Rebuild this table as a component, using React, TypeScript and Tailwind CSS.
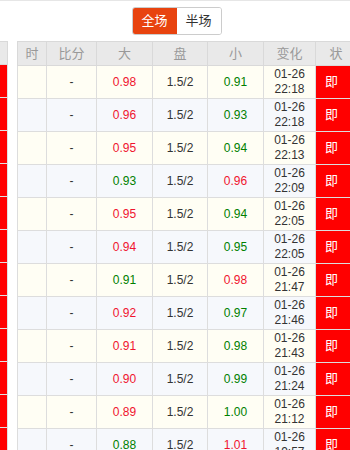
import React from "react";

type Row = { big: string; bigUp: boolean; small: string; smallUp: boolean; time: string };

const rows: Row[] = [
  { big: "0.98", bigUp: true, small: "0.91", smallUp: false, time: "22:18" },
  { big: "0.96", bigUp: true, small: "0.93", smallUp: false, time: "22:18" },
  { big: "0.95", bigUp: true, small: "0.94", smallUp: false, time: "22:13" },
  { big: "0.93", bigUp: false, small: "0.96", smallUp: true, time: "22:09" },
  { big: "0.95", bigUp: true, small: "0.94", smallUp: false, time: "22:05" },
  { big: "0.94", bigUp: true, small: "0.95", smallUp: false, time: "22:05" },
  { big: "0.91", bigUp: false, small: "0.98", smallUp: true, time: "21:47" },
  { big: "0.92", bigUp: true, small: "0.97", smallUp: false, time: "21:46" },
  { big: "0.91", bigUp: true, small: "0.98", smallUp: false, time: "21:43" },
  { big: "0.90", bigUp: true, small: "0.99", smallUp: false, time: "21:24" },
  { big: "0.89", bigUp: true, small: "1.00", smallUp: false, time: "21:12" },
  { big: "0.88", bigUp: false, small: "1.01", smallUp: true, time: "19:57" },
];

const font = { fontFamily: '"Liberation Sans", "Noto Sans CJK SC", sans-serif' };

export default function App() {
  return (
    <div className="w-[350px] h-[450px] overflow-hidden bg-white border-t border-[#e6e6e6]" style={font}>
      <div className="flex justify-center pt-[6px] pl-[3px]">
        <div className="flex h-[28px] rounded-[3px] border border-[#cccccc] overflow-hidden">
          <div className="w-[44px] flex items-center justify-center bg-[#e8430f] text-white text-[13px]">全场</div>
          <div className="w-[44px] flex items-center justify-center bg-white text-[#333] text-[13px]">半场</div>
        </div>
      </div>
      <div className="flex mt-[6px] gap-[9px]">
        <div className="w-[8px] shrink-0 flex flex-col">
          <div className="h-[24px] bg-[#e9e9e9] border-r border-t border-[#d9d9d9] border-b"></div>
          {rows.map((_, i) => (
            <div key={i} className="h-[33px] bg-[#ff0000] border-r border-b border-[#e0e0e0]"></div>
          ))}
        </div>
        <table className="border-collapse table-fixed shrink-0 w-[339px] text-[12px]">
          <colgroup>
            <col className="w-[29px]" />
            <col className="w-[50px]" />
            <col className="w-[56px]" />
            <col className="w-[55px]" />
            <col className="w-[56px]" />
            <col className="w-[52px]" />
            <col className="w-[41px]" />
          </colgroup>
          <thead>
            <tr className="h-[24px] bg-[#e9e9e9] text-[#999] text-[13px]">
              {["时", "比分", "大", "盘", "小", "变化", "状"].map((h) => (
                <th key={h} className="border border-[#d9d9d9] font-normal p-0 text-center">{h}</th>
              ))}
            </tr>
          </thead>
          <tbody>
            {rows.map((r, i) => (
              <tr key={i} className={`h-[33px] ${i % 2 === 0 ? "bg-[#fffef4]" : "bg-[#f6f8fc]"}`}>
                <td className="border border-[#dddddd] p-0"></td>
                <td className="border border-[#dddddd] p-0 text-center text-[#333]">-</td>
                <td className={`border border-[#dddddd] p-0 text-center ${r.bigUp ? "text-[#f0142f]" : "text-[#008000]"}`}>{r.big}</td>
                <td className="border border-[#dddddd] p-0 text-center text-[#333]">1.5/2</td>
                <td className={`border border-[#dddddd] p-0 text-center ${r.smallUp ? "text-[#f0142f]" : "text-[#008000]"}`}>{r.small}</td>
                <td className="border border-[#dddddd] p-0 text-center text-[#333] leading-[15px]">
                  01-26
                  <br />
                  {r.time}
                </td>
                <td className="border border-[#dddddd] p-0 text-left pl-[9px] bg-[#ff0000] text-white text-[13px]">即</td>
              </tr>
            ))}
          </tbody>
        </table>
      </div>
    </div>
  );
}
